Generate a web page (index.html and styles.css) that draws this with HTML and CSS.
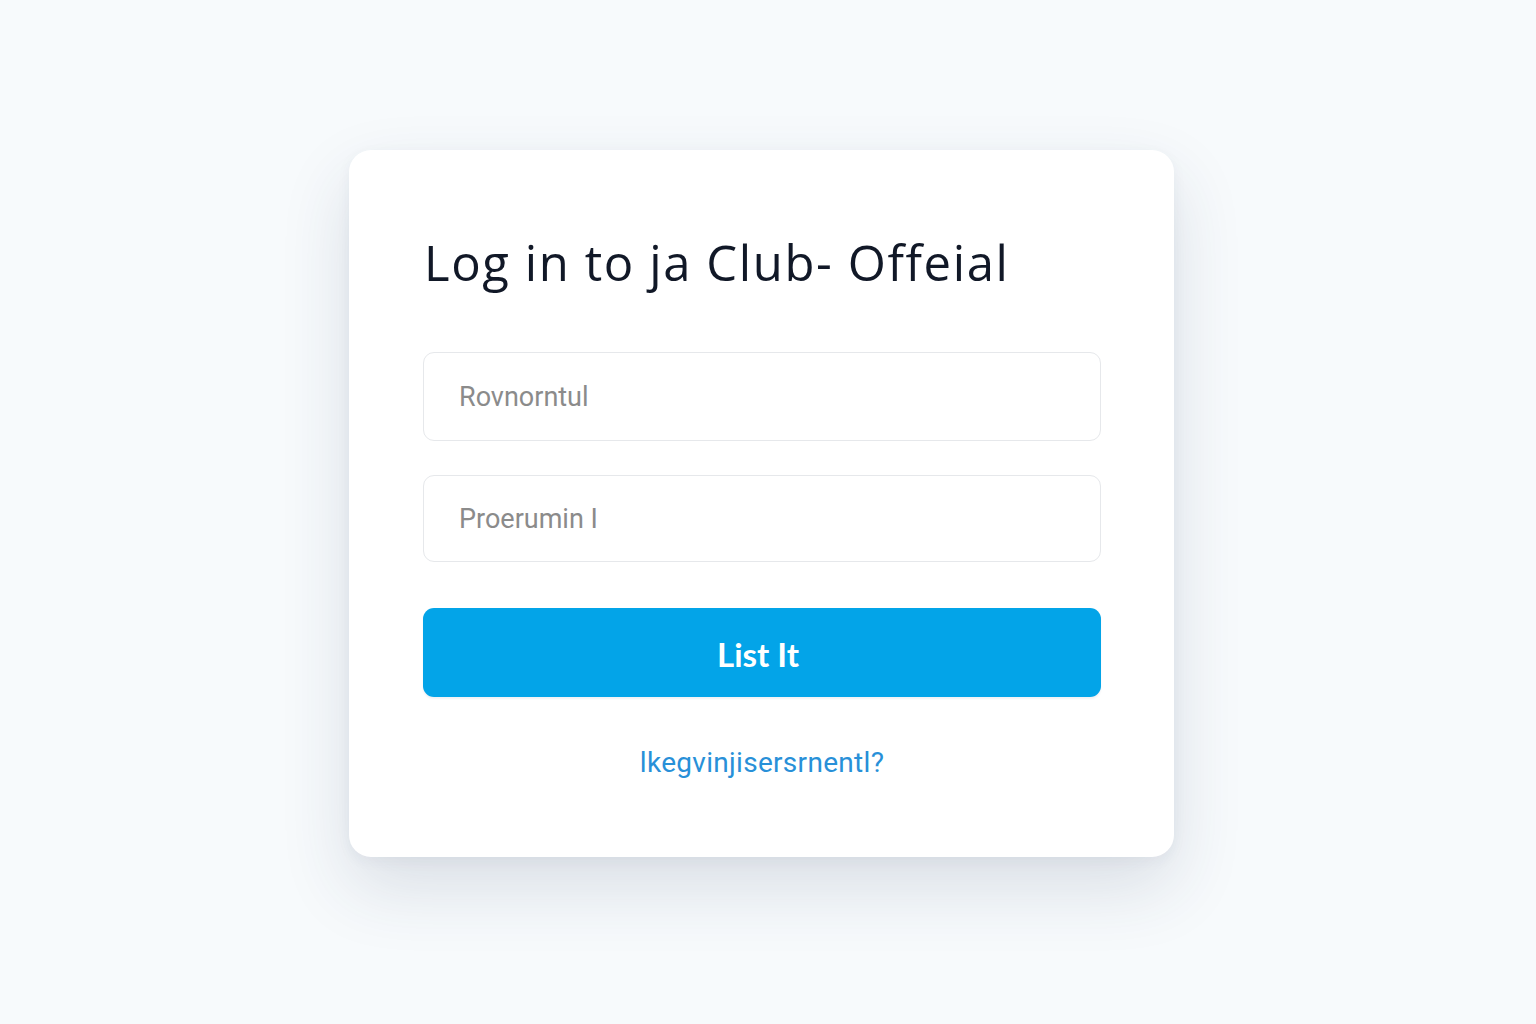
FILE: index.html
```html
<!DOCTYPE html>
<html lang="en">
<head>
<meta charset="utf-8">
<title>Log in</title>
<link rel="stylesheet" href="styles.css">
</head>
<body>
<main class="page">
  <section class="card">
    <h1 class="title">Log in to ja Club- Offeial</h1>
    <form class="form">
      <input class="field field-first" type="text" placeholder="Rovnorntul">
      <input class="field field-second" type="password" placeholder="Proerumin I">
      <button class="btn" type="button">List It</button>
    </form>
    <a class="link" href="#">lkegvinjisersrnentl?</a>
  </section>
</main>
</body>
</html>
```
FILE: styles.css
```css
* { box-sizing: border-box; }
html, body { margin: 0; padding: 0; }
body {
  background: #f7fafc;
  width: 1536px;
  height: 1024px;
  overflow: hidden;
  font-family: "Open Sans", "Noto Sans", sans-serif;
}
.page {
  padding: 150px 0 0 349px;
}
.card {
  width: 825px;
  height: 707px;
  background: #ffffff;
  border-radius: 22px;
  padding: 82px 73px 0 74px;
  box-shadow: 0 30px 70px rgba(40, 60, 90, 0.14), 0 4px 14px rgba(40, 60, 90, 0.05);
  display: flex;
  flex-direction: column;
}
.title {
  margin: 0 0 0 1px;
  font-size: 49px;
  font-weight: 400;
  line-height: 60px;
  color: #111827;
  letter-spacing: 1.6px;
}
.form {
  margin-top: 60px;
  display: flex;
  flex-direction: column;
}
.field {
  width: 678px;
  height: 89px;
  border: 1.5px solid #e6e8eb;
  border-radius: 11px;
  padding: 0 0 0 35px;
  font-family: "Roboto", "Liberation Sans", sans-serif;
  font-size: 27px;
  letter-spacing: 0;
  outline: none;
  background: #fff;
}
.field::placeholder { color: #8b8b8b; }
.field-second {
  margin-top: 34px;
  height: 87px;
}
.btn {
  margin-top: 46px;
  width: 678px;
  height: 89px;
  border: none;
  border-radius: 11px;
  background: #03a4e8;
  color: #ffffff;
  font-family: "Lato", "Open Sans", sans-serif;
  font-weight: 700;
  font-size: 33px;
  letter-spacing: 0;
  padding: 2px 8px 0 0;
  box-shadow: 0 2px 2px rgba(0, 40, 80, 0.06);
}
.link {
  margin-top: 49px;
  align-self: center;
  font-family: "Roboto", "Liberation Sans", sans-serif;
  font-size: 28px;
  letter-spacing: 0.3px;
  color: #2890d8;
  text-decoration: none;
}
```
